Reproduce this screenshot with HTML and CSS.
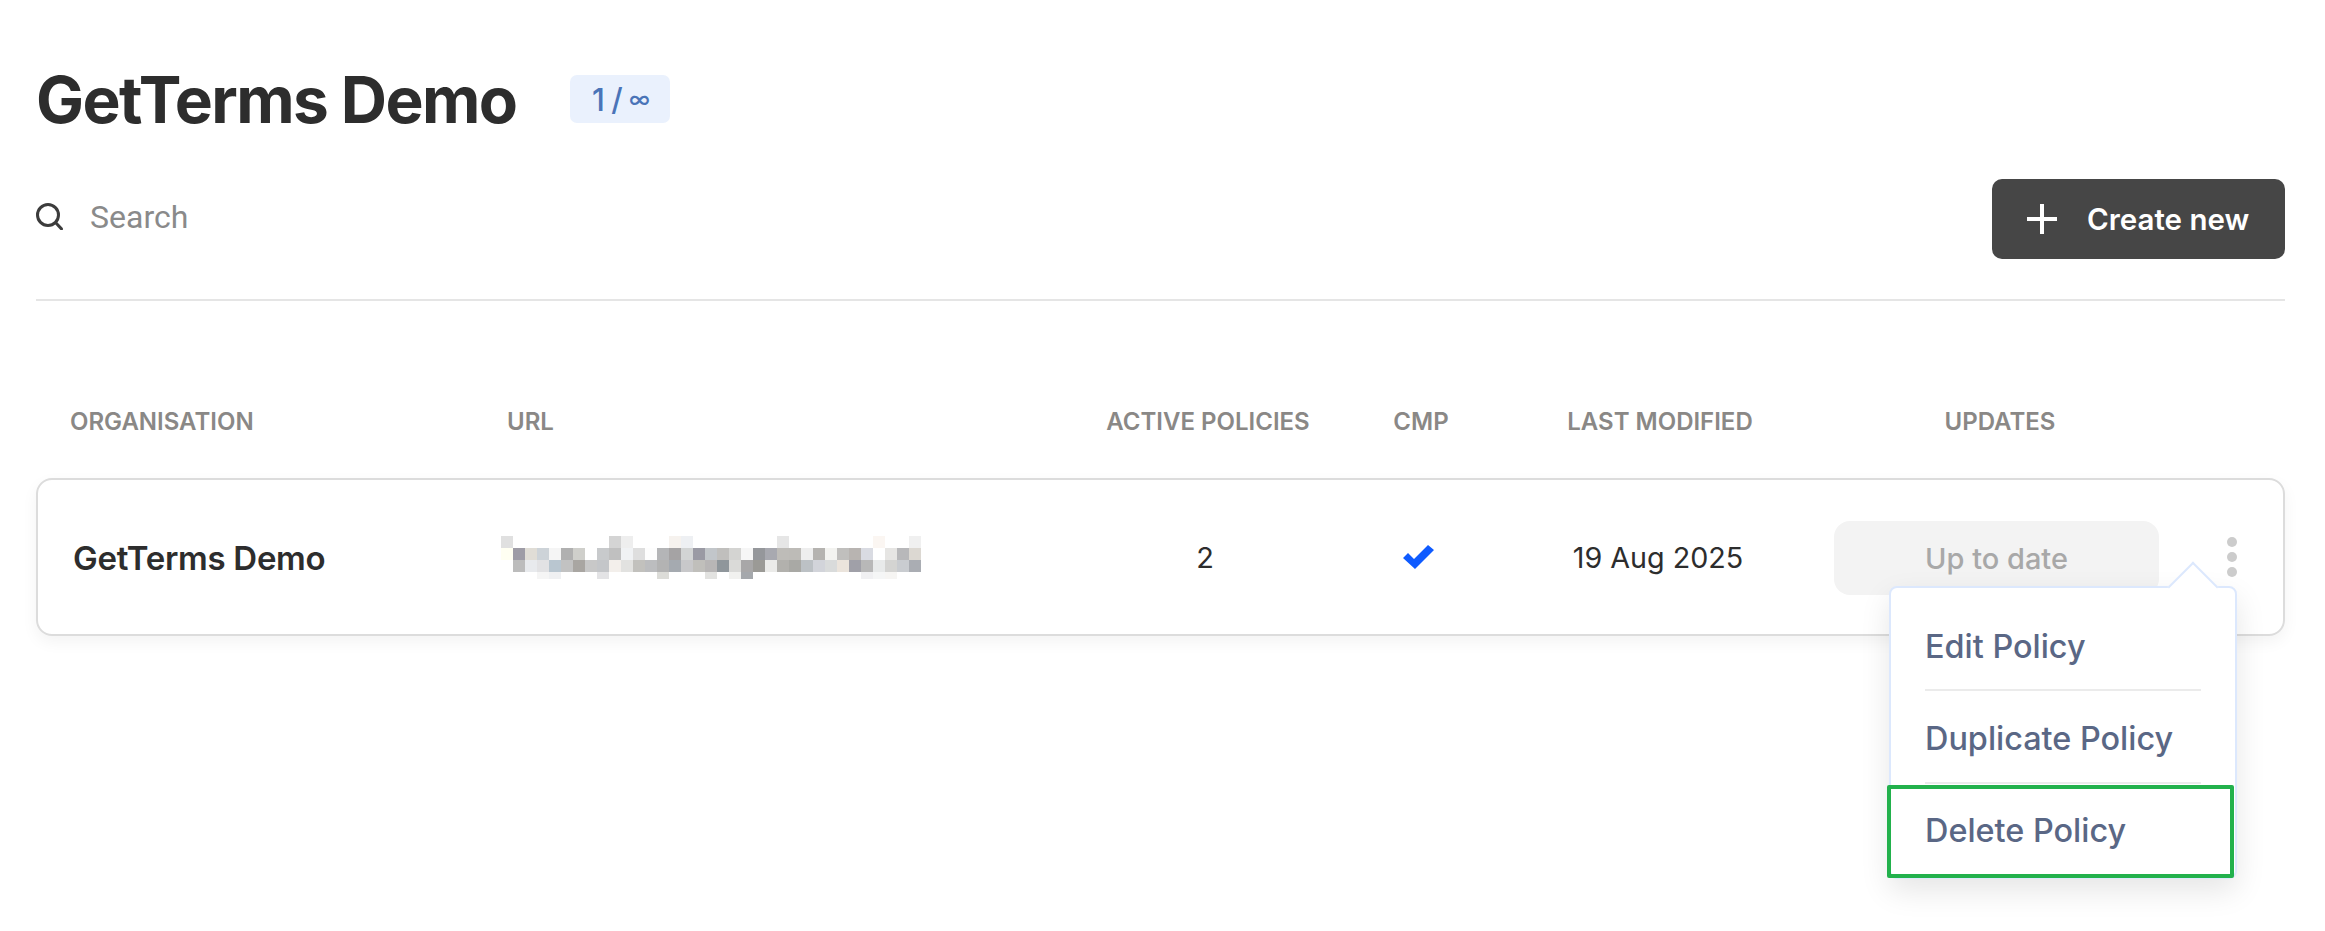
FILE: index.html
```html
<!DOCTYPE html>
<html lang="en">
<head>
    <meta charset="UTF-8">
    <meta name="viewport" content="width=device-width, initial-scale=1.0">
    <title>GetTerms Demo</title>
    <link rel="stylesheet" href="styles.css">
</head>
<body>
    <div class="page">
        <div class="title-row">
            <h1>GetTerms Demo</h1>
            <span class="badge">1 / <span class="badge-inf">∞</span></span>
        </div>

        <div class="tools-row">
            <div class="search">
                <svg class="search-icon" viewBox="0 0 27 27" width="27" height="27" fill="none" stroke="#3c3c3c" stroke-width="3">
                    <circle cx="12" cy="12" r="10.5"/>
                    <path d="M19.5 19.5L26.5 27"/>
                </svg>
                <span class="search-text">Search</span>
            </div>
            <button class="create-btn">
                <svg viewBox="0 0 30 30" width="30" height="30" fill="none" stroke="#fff" stroke-width="4">
                    <path d="M15 0V30M0 15H30"/>
                </svg>
                Create new
            </button>
        </div>

        <div class="grid table-head">
            <div class="head-org">ORGANISATION</div>
            <div>URL</div>
            <div class="center">ACTIVE POLICIES</div>
            <div class="center">CMP</div>
            <div class="center">LAST MODIFIED</div>
            <div class="center">UPDATES</div>
        </div>

        <div class="grid card">
            <div class="org-name">GetTerms Demo</div>
            <div class="url-cell">
                <svg class="mosaic" width="420" height="43" viewBox="0 0 420 43" shape-rendering="crispEdges">
                    <g>
                        <rect x="0" y="0" width="12" height="12" fill="#e0e0e0"/>
                        <rect x="108" y="0" width="12" height="12" fill="#d4d4d4"/>
                        <rect x="120" y="0" width="12" height="12" fill="#eeeeee"/>
                        <rect x="168" y="0" width="12" height="12" fill="#f6f2ee"/>
                        <rect x="180" y="0" width="12" height="12" fill="#eef0f3"/>
                        <rect x="276" y="0" width="12" height="12" fill="#e6e6e6"/>
                        <rect x="372" y="0" width="12" height="12" fill="#fbf6f2"/>
                        <rect x="408" y="0" width="12" height="12" fill="#f0f0f0"/>
                    </g>
                    <g>
                        <rect x="0" y="12" width="12" height="12" fill="#fffff2"/>
                        <rect x="12" y="12" width="12" height="12" fill="#9e9ca6"/>
                        <rect x="24" y="12" width="12" height="12" fill="#e0ddd6"/>
                        <rect x="36" y="12" width="12" height="12" fill="#cdd3d8"/>
                        <rect x="48" y="12" width="12" height="12" fill="#f5f5f5"/>
                        <rect x="60" y="12" width="12" height="12" fill="#b0b0b0"/>
                        <rect x="72" y="12" width="12" height="12" fill="#cfcfcb"/>
                        <rect x="96" y="12" width="12" height="12" fill="#c8cacc"/>
                        <rect x="108" y="12" width="12" height="12" fill="#c0c0c0"/>
                        <rect x="120" y="12" width="12" height="12" fill="#f0f2f4"/>
                        <rect x="132" y="12" width="12" height="12" fill="#dedede"/>
                        <rect x="144" y="12" width="12" height="12" fill="#fdfdfd"/>
                        <rect x="156" y="12" width="12" height="12" fill="#b4b5b7"/>
                        <rect x="168" y="12" width="12" height="12" fill="#a5a3a4"/>
                        <rect x="180" y="12" width="12" height="12" fill="#d2d4d4"/>
                        <rect x="192" y="12" width="12" height="12" fill="#9a9aa4"/>
                        <rect x="204" y="12" width="12" height="12" fill="#c2c6ca"/>
                        <rect x="216" y="12" width="12" height="12" fill="#c0bfbd"/>
                        <rect x="228" y="12" width="12" height="12" fill="#d4d4d2"/>
                        <rect x="240" y="12" width="12" height="12" fill="#f6f6f6"/>
                        <rect x="252" y="12" width="12" height="12" fill="#95979b"/>
                        <rect x="264" y="12" width="12" height="12" fill="#a8a9b0"/>
                        <rect x="276" y="12" width="12" height="12" fill="#bebcb8"/>
                        <rect x="288" y="12" width="12" height="12" fill="#bdbbb7"/>
                        <rect x="300" y="12" width="12" height="12" fill="#eeeeee"/>
                        <rect x="312" y="12" width="12" height="12" fill="#b5b3b0"/>
                        <rect x="324" y="12" width="12" height="12" fill="#f3f3f0"/>
                        <rect x="336" y="12" width="12" height="12" fill="#c0bfbd"/>
                        <rect x="348" y="12" width="12" height="12" fill="#b8b4b1"/>
                        <rect x="360" y="12" width="12" height="12" fill="#d9dbe2"/>
                        <rect x="384" y="12" width="12" height="12" fill="#e6e5e3"/>
                        <rect x="396" y="12" width="12" height="12" fill="#b8b8ba"/>
                        <rect x="408" y="12" width="12" height="12" fill="#dcd8d2"/>
                    </g>
                    <g>
                        <rect x="12" y="24" width="12" height="12" fill="#bcbcbc"/>
                        <rect x="24" y="24" width="12" height="12" fill="#e8eaed"/>
                        <rect x="36" y="24" width="12" height="12" fill="#e2e2e4"/>
                        <rect x="48" y="24" width="12" height="12" fill="#b9c6d0"/>
                        <rect x="60" y="24" width="12" height="12" fill="#c2c2c2"/>
                        <rect x="72" y="24" width="12" height="12" fill="#a9a6a2"/>
                        <rect x="84" y="24" width="12" height="12" fill="#c8c8c8"/>
                        <rect x="96" y="24" width="12" height="12" fill="#c4c6c9"/>
                        <rect x="108" y="24" width="12" height="12" fill="#f3efeb"/>
                        <rect x="120" y="24" width="12" height="12" fill="#e2e2e0"/>
                        <rect x="132" y="24" width="12" height="12" fill="#c2c1bd"/>
                        <rect x="144" y="24" width="12" height="12" fill="#bcbdbf"/>
                        <rect x="156" y="24" width="12" height="12" fill="#b3b3b3"/>
                        <rect x="168" y="24" width="12" height="12" fill="#a5aab0"/>
                        <rect x="180" y="24" width="12" height="12" fill="#c8c8ca"/>
                        <rect x="192" y="24" width="12" height="12" fill="#c0bfbb"/>
                        <rect x="204" y="24" width="12" height="12" fill="#b8b6b6"/>
                        <rect x="216" y="24" width="12" height="12" fill="#8f969b"/>
                        <rect x="228" y="24" width="12" height="12" fill="#dadad8"/>
                        <rect x="240" y="24" width="12" height="12" fill="#a8a7a8"/>
                        <rect x="252" y="24" width="12" height="12" fill="#9b9a96"/>
                        <rect x="264" y="24" width="12" height="12" fill="#ebebe9"/>
                        <rect x="276" y="24" width="12" height="12" fill="#b2b1ad"/>
                        <rect x="288" y="24" width="12" height="12" fill="#a9a9a5"/>
                        <rect x="300" y="24" width="12" height="12" fill="#bcc1c5"/>
                        <rect x="312" y="24" width="12" height="12" fill="#d2d4da"/>
                        <rect x="324" y="24" width="12" height="12" fill="#d9dbdb"/>
                        <rect x="336" y="24" width="12" height="12" fill="#ebe4dc"/>
                        <rect x="348" y="24" width="12" height="12" fill="#a0a0a8"/>
                        <rect x="360" y="24" width="12" height="12" fill="#b8b8b8"/>
                        <rect x="372" y="24" width="12" height="12" fill="#e8eaea"/>
                        <rect x="384" y="24" width="12" height="12" fill="#d4d4d2"/>
                        <rect x="396" y="24" width="12" height="12" fill="#c9ccd0"/>
                        <rect x="408" y="24" width="12" height="12" fill="#aaadb3"/>
                    </g>
                    <g>
                        <rect x="36" y="36" width="12" height="7" fill="#f5f5f5"/>
                        <rect x="48" y="36" width="12" height="7" fill="#eff0f2"/>
                        <rect x="96" y="36" width="12" height="7" fill="#e3e3e5"/>
                        <rect x="156" y="36" width="12" height="7" fill="#dcdcd8"/>
                        <rect x="204" y="36" width="12" height="7" fill="#e2e2e0"/>
                        <rect x="228" y="36" width="12" height="7" fill="#f1f1ef"/>
                        <rect x="240" y="36" width="12" height="7" fill="#a5a8ac"/>
                        <rect x="360" y="36" width="12" height="7" fill="#f0f0f2"/>
                        <rect x="372" y="36" width="12" height="7" fill="#f5f6f6"/>
                        <rect x="384" y="36" width="12" height="7" fill="#f6f5f3"/>
                    </g>
                </svg>
            </div>
            <div class="center cell-text">2</div>
            <div class="center check-cell">
                <svg viewBox="0 0 31 24" width="31" height="24">
                    <path d="M0 13L5 8L11 14L25 0L31 5L12 24Z" fill="#0f5bff"/>
                </svg>
            </div>
            <div class="center cell-text cell-date">19 Aug 2025</div>
            <div class="update-cell">
                <div class="update-pill">Up to date</div>
            </div>
            <div class="menu-cell">
                <span class="dot"></span>
                <span class="dot"></span>
                <span class="dot"></span>
            </div>

            <div class="popover">
                <div class="popover-arrow"></div>
                <div class="popover-item item-first">Edit Policy</div>
                <div class="popover-item">Duplicate Policy</div>
                <div class="popover-item highlighted">Delete Policy</div>
            </div>
        </div>
    </div>
</body>
</html>
```

FILE: styles.css
```css
*, *::after {
    box-sizing: border-box;
}

html, body {
    height: 100%;
}

body {
    margin: 0;
    background-color: #fff;
    font-family: Inter, "Liberation Sans", sans-serif;
    color: #2d2d2d;
    overflow: hidden;
}

.page {
    padding: 70px 40px 0 36px;
}

.title-row {
    display: flex;
    align-items: center;
    height: 58px;
}

h1 {
    margin: 0;
    font-size: 64px;
    font-weight: 700;
    letter-spacing: -1.6px;
    color: #2d2d2d;
}

.badge {
    margin-left: 54px;
    width: 100px;
    height: 48px;
    display: flex;
    align-items: center;
    justify-content: center;
    white-space: pre;
    border-radius: 7px;
    background-color: #eaf1fd;
    color: #4a74b8;
    font-size: 31px;
    font-weight: 500;
    letter-spacing: -1px;
}

.badge-inf {
    font-size: 22px;
}

.tools-row {
    display: flex;
    align-items: center;
    justify-content: space-between;
    margin-top: 51px;
    padding-bottom: 40px;
    border-bottom: 2px solid #e5e5e5;
}

.search {
    display: flex;
    align-items: center;
    margin-top: -5px;
}

.search-text {
    margin-left: 27px;
    font-family: Roboto, sans-serif;
    font-size: 32px;
    color: #8a8a8a;
}

.create-btn {
    display: flex;
    align-items: center;
    gap: 30px;
    width: 293px;
    height: 80px;
    padding: 0 0 0 35px;
    border: 0;
    border-radius: 10px;
    background-color: #464646;
    color: #fff;
    font-family: Inter, sans-serif;
    font-size: 29.5px;
    font-weight: 600;
}

.grid {
    display: grid;
    grid-template-columns: 471px 591px 220px 206px 272px 408px 1fr;
    align-items: center;
}

.table-head {
    margin-top: 105px;
    height: 30px;
    font-size: 24px;
    font-weight: 600;
    color: #8a8886;
}

.head-org {
    padding-left: 34px;
}

.center {
    text-align: center;
}

.card {
    position: relative;
    margin-top: 42px;
    height: 158px;
    border: 2px solid #dcdcdc;
    border-radius: 16px;
    box-shadow: 0 6px 16px rgba(0, 0, 0, 0.05);
    grid-template-columns: 463px 594px 220px 206px 272px 411px 1fr;
}

.org-name {
    padding-left: 35px;
    padding-top: 2px;
    font-size: 33px;
    font-weight: 600;
    letter-spacing: -0.3px;
}

.mosaic {
    display: block;
}

.cell-text {
    font-size: 29px;
}

.cell-date {
    padding-left: 2px;
    font-size: 28.7px;
}

.check-cell {
    line-height: 0;
}

.update-pill {
    width: 325px;
    height: 74px;
    margin-top: 2px;
    margin-left: 41px;
    display: flex;
    align-items: center;
    justify-content: center;
    border-radius: 16px;
    background-color: #f3f3f3;
    color: #a8a8a8;
    font-size: 29px;
    font-weight: 500;
}

.menu-cell {
    display: flex;
    flex-direction: column;
    align-items: center;
    gap: 5px;
    padding-right: 24px;
}

.dot {
    width: 10px;
    height: 10px;
    border-radius: 50%;
    background-color: #ccc;
}

.popover {
    position: absolute;
    top: 106px;
    right: 46px;
    width: 348px;
    height: 293px;
    padding-top: 10px;
    background-color: #fff;
    border: 2px solid #dce8fd;
    border-radius: 8px;
    box-shadow: 0 12px 30px rgba(0, 0, 0, 0.1);
}

.popover-arrow {
    position: absolute;
    top: -19px;
    right: 24px;
    width: 36px;
    height: 36px;
    transform: rotate(45deg);
    background-color: #fff;
    border-top: 2px solid #dce8fd;
    border-left: 2px solid #dce8fd;
}

.popover-item {
    position: relative;
    height: 93px;
    margin: 0 34px;
    padding-top: 3px;
    display: flex;
    align-items: center;
    border-bottom: 2px solid #ebebeb;
    color: #5a6785;
    font-size: 32.4px;
    font-weight: 500;
}

.item-first {
    padding-top: 6px;
}

.popover-item.highlighted {
    padding-top: 0;
    border-bottom: 0;
}

.highlighted::after {
    content: "";
    position: absolute;
    top: 1px;
    left: -38px;
    width: 347px;
    height: 93px;
    border: 4px solid #22b14c;
    border-radius: 2px;
}
```
